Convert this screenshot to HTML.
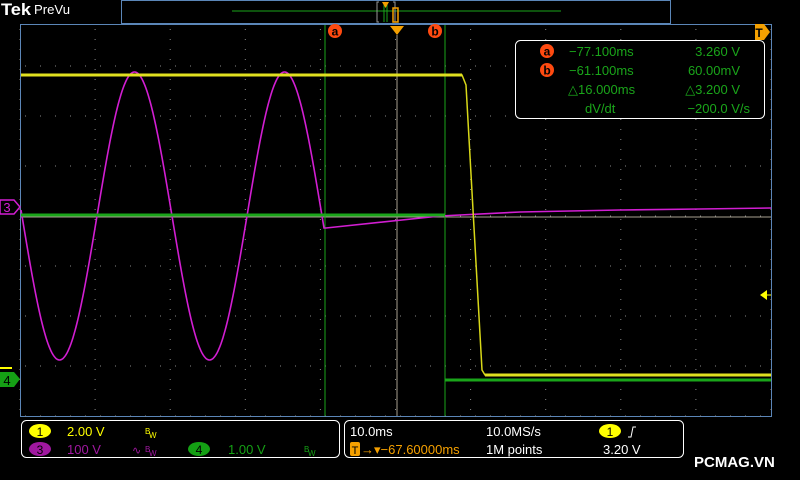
<!DOCTYPE html>
<html><head><meta charset="utf-8"><style>
body{margin:0;background:#000;width:800px;height:480px;overflow:hidden;font-family:"Liberation Sans",sans-serif}
svg{position:absolute;left:0;top:0}
text{font-family:"Liberation Sans",sans-serif}
</style></head><body>
<svg id="s" width="800" height="480" xmlns="http://www.w3.org/2000/svg">
<rect width="800" height="480" fill="#000"/>
<text x="1" y="15" fill="#fff" font-size="17" font-weight="bold" font-family="Liberation Serif" textLength="30" lengthAdjust="spacingAndGlyphs">Tek</text>
<text x="34" y="14" fill="#fff" font-size="13" textLength="36" lengthAdjust="spacingAndGlyphs">PreVu</text>
<rect x="121.5" y="0.5" width="549" height="23" fill="none" stroke="#5b86b8"/>
<line x1="232" y1="11" x2="561" y2="11" stroke="#1aa51a"/>
<path d="M379 2h-2v20h2M393 2h2v20h-2" fill="none" stroke="#999"/>
<line x1="384" y1="3" x2="384" y2="22" stroke="#1aa51a"/>
<line x1="387" y1="3" x2="387" y2="22" stroke="#1aa51a"/>
<path d="M382 2h7l-3.5 6z" fill="#f5a000"/>
<rect x="393" y="8" width="5" height="14" fill="none" stroke="#f5a000" stroke-width="1.5"/>
<rect x="20.5" y="24.5" width="751" height="392" fill="none" stroke="#5b86b8"/>
<g id="grid"></g>
<line x1="21" y1="217" x2="771" y2="217" stroke="#a8a090"/>
<line x1="325" y1="25" x2="325" y2="416" stroke="#1aa51a"/>
<line x1="445" y1="25" x2="445" y2="416" stroke="#1aa51a"/>
<line x1="397" y1="35" x2="397" y2="416" stroke="#a8a090"/>
<path d="M390 26h14l-7 9z" fill="#f5a000"/>
<circle cx="335" cy="31" r="7" fill="#ff4a10"/><text x="335" y="35.5" fill="#000" font-size="12" font-weight="bold" text-anchor="middle">a</text>
<circle cx="435" cy="31" r="7" fill="#ff4a10"/><text x="435" y="35.5" fill="#000" font-size="12" font-weight="bold" text-anchor="middle">b</text>
<path d="M755 24h9l6 8-6 8h-9z" fill="#f5a000"/><text x="759" y="37" fill="#000" font-size="12" font-weight="bold" text-anchor="middle">T</text>
<path id="ch3" fill="none" stroke="#d21ed2" stroke-width="1.6"/>
<path d="M21 215H445" stroke="#1aa51a" stroke-width="3" fill="none"/>
<path d="M445 380H771" stroke="#1aa51a" stroke-width="3" fill="none"/>
<path d="M21 75H462L466 85L482 370L485 375H771" stroke="#d8d818" stroke-width="1.5" fill="none"/>
<path d="M21 75H462M485 375H771" stroke="#e0e020" stroke-width="3" fill="none"/>
<path d="M760 295l7-5v10z" fill="#ffff00"/><line x1="764" y1="295" x2="771" y2="295" stroke="#ffff00"/>
<path d="M0 200h14l6 7-6 7H0z" fill="#000" stroke="#d21ed2" stroke-width="1.5"/><text x="7" y="212" fill="#d21ed2" font-size="13" text-anchor="middle">3</text>
<path d="M0 368h12" stroke="#ffff00" stroke-width="2"/>
<path d="M0 372h14l6 7-6 8H0z" fill="#15a015"/><text x="7" y="385" fill="#000" font-size="13" text-anchor="middle">4</text>
<rect x="515.5" y="40.5" width="249" height="78" rx="5" fill="#000" stroke="#fff"/>
<g font-size="13" fill="#1aa51a">
<circle cx="547" cy="51" r="7" fill="#ff4a10"/><text x="547" y="55.5" fill="#000" font-size="12" font-weight="bold" text-anchor="middle">a</text>
<circle cx="547" cy="70" r="7" fill="#ff4a10"/><text x="547" y="74.5" fill="#000" font-size="12" font-weight="bold" text-anchor="middle">b</text>
<text x="569" y="56">−77.100ms</text><text x="740" y="56" text-anchor="end">3.260 V</text>
<text x="569" y="75">−61.100ms</text><text x="740" y="75" text-anchor="end">60.00mV</text>
<text x="568" y="94">△16.000ms</text><text x="740" y="94" text-anchor="end">△3.200 V</text>
<text x="585" y="113">dV/dt</text><text x="750" y="113" text-anchor="end">−200.0 V/s</text>
</g>
<rect x="21.5" y="420.5" width="318" height="37" rx="5" fill="none" stroke="#fff"/>
<rect x="344.5" y="420.5" width="339" height="37" rx="5" fill="none" stroke="#fff"/>
<g font-size="13">
<ellipse cx="40" cy="431" rx="11" ry="7" fill="#ffff00"/><text x="40" y="436" font-size="12" text-anchor="middle" fill="#000">1</text>
<text x="67" y="436" fill="#ffff00">2.00 V</text><text x="145" y="434" fill="#ffff00" font-size="8">B</text><text x="149" y="438" fill="#ffff00" font-size="8">W</text>
<ellipse cx="40" cy="449" rx="11" ry="7" fill="#a018a0"/><text x="40" y="454" font-size="12" text-anchor="middle" fill="#000">3</text>
<text x="67" y="454" fill="#a018a0">100 V</text><text x="132" y="454" fill="#a018a0" font-size="11">∿</text><text x="145" y="452" fill="#a018a0" font-size="8">B</text><text x="149" y="456" fill="#a018a0" font-size="8">W</text>
<ellipse cx="199" cy="449" rx="11" ry="7" fill="#14a014"/><text x="199" y="454" font-size="12" text-anchor="middle" fill="#000">4</text>
<text x="228" y="454" fill="#14a014">1.00 V</text><text x="304" y="452" fill="#14a014" font-size="8">B</text><text x="308" y="456" fill="#14a014" font-size="8">W</text>
<text x="350" y="436" fill="#fff">10.0ms</text><text x="486" y="436" fill="#fff">10.0MS/s</text>
<ellipse cx="610" cy="431" rx="11" ry="7" fill="#ffff00"/><text x="610" y="436" font-size="12" text-anchor="middle" fill="#000">1</text>
<path d="M628 437l3 0 2-10 3 0" stroke="#fff" fill="none"/>
<rect x="350" y="442" width="10" height="14" rx="2" fill="#f5a000"/><text x="355" y="454" font-size="11" text-anchor="middle" fill="#000">T</text>
<text x="361" y="454" fill="#f5a000">→▾−67.60000ms</text>
<text x="486" y="454" fill="#fff">1M points</text><text x="603" y="454" fill="#fff">3.20 V</text>
</g>
<text x="694" y="467" fill="#fff" font-size="15" font-weight="bold">PCMAG.VN</text>
</svg>
<script>
var g=document.getElementById('grid'),s='';
for(var i=0;i<=10;i++){var x=20+75.1*i;for(var y=29;y<416;y+=10){s+='<rect x="'+(x-0.5)+'" y="'+y+'" width="1" height="1" fill="#888"/>';}}
for(var j=0;j<=8;j++){var y=16+50*j;if(y<25)continue;for(var x=25;x<771;x+=15){s+='<rect x="'+x+'" y="'+(y-0.5)+'" width="1" height="1" fill="#888"/>';}}
g.innerHTML=s;
var d='M21 '+(216+144*Math.sin(2*Math.PI*(21-22)/150));
for(var x=22;x<=324;x++){d+='L'+x+' '+(216+144*Math.sin(2*Math.PI*(x-22)/150)).toFixed(1);}
d+='L326 228L440 216L520 212L620 210L700 209L771 208';
document.getElementById('ch3').setAttribute('d',d);
</script>
</body></html>
